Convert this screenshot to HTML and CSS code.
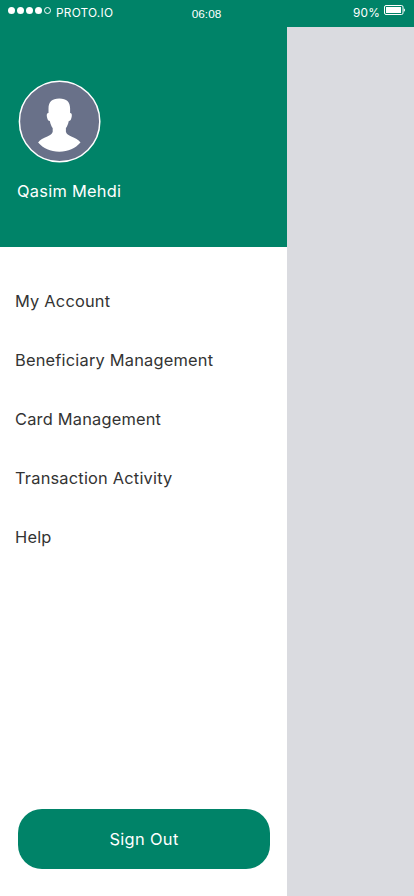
FILE: index.html
```html
<!DOCTYPE html>
<html lang="en">
<head>
<meta charset="utf-8">
<title>Account menu</title>
<link rel="stylesheet" href="styles.css">
</head>
<body>
<header class="status">
  <div class="carrier">
    <svg class="signal" width="43" height="8" viewBox="0 0 43 8">
      <g fill="#fff"><circle cx="3.5" cy="3.5" r="3.5"/><circle cx="12.5" cy="3.5" r="3.5"/><circle cx="21.5" cy="3.5" r="3.5"/><circle cx="30.5" cy="3.5" r="3.5"/></g>
      <circle cx="39.5" cy="3.5" r="3" fill="none" stroke="#fff" stroke-width="1"/>
    </svg>
    <span class="carrier-name">PROTO.IO</span>
  </div>
  <span class="time">06:08</span>
  <div class="power">
    <span class="percent">90%</span>
    <svg class="battery" width="21" height="10" viewBox="0 0 21 10">
      <rect x=".5" y=".5" width="18.5" height="9" rx="1.5" fill="none" stroke="#fff"/>
      <rect x="2" y="2" width="15" height="6" fill="#fff"/>
      <path d="M19.7 3.2Q21 3.6 21 5T19.7 6.8Z" fill="#fff"/>
    </svg>
  </div>
</header>
<aside class="drawer">
  <section class="profile">
    <svg class="avatar" width="82" height="82" viewBox="0 0 82 82">
      <circle cx="41.6" cy="40.5" r="40.2" fill="#697189" stroke="#fff" stroke-width="1.5"/>
      <path transform="translate(.3 -.5)" fill="#fff" d="M41 18C48.5 18 51.8 21.5 51.8 28V32.5C53.4 32.6 53.8 34 53.4 36.2C52.9 39 52.1 40.4 50.5 40.4C49.7 44 48.7 46 47.6 47.6V51.3C48 53.6 50.3 54.8 53 56.1C57 57.6 60 59.4 62.2 62C57 68 50 71.2 41 71.2S25 68 19.8 62C22 59.4 25 57.6 29 56.1C31.7 54.8 34 53.6 34.4 51.3V47.6C33.3 46 32.3 44 31.5 40.4C29.9 40.4 29.1 39 28.6 36.2C28.2 34 28.6 32.6 30.2 32.5V28C30.2 21.5 33.5 18 41 18Z"/>
    </svg>
    <div class="name">Qasim Mehdi</div>
  </section>
  <nav class="menu">
    <a class="item">My Account</a>
    <a class="item">Beneficiary Management</a>
    <a class="item">Card Management</a>
    <a class="item">Transaction Activity</a>
    <a class="item">Help</a>
  </nav>
  <button class="signout">Sign Out</button>
</aside>
</body>
</html>
```
FILE: styles.css
```css
* { box-sizing: border-box; }
body {
  margin: 0;
  height: 896px;
  display: flex;
  flex-direction: column;
  overflow: hidden;
  background: #dadbe0;
  font-family: Inter, "Liberation Sans", sans-serif;
}
.status {
  height: 27px;
  flex: none;
  display: grid;
  grid-template-columns: 1fr auto 1fr;
  align-items: start;
  padding: 0 9px 0 8px;
  background: #008368;
  color: #fff;
  font-size: 11.8px;
  line-height: 14px;
}
.carrier, .power { display: flex; align-items: flex-start; }
.power { justify-content: flex-end; }
.signal { margin-top: 7px; }
.carrier-name { margin: 6px 0 0 5px; letter-spacing: .25px; }
.time { margin-top: 7px; font-family: "Liberation Sans", sans-serif; font-size: 11.8px; }
.percent { margin: 6px 4px 0 0; letter-spacing: .2px; }
.battery { margin-top: 5px; }
.drawer {
  width: 287px;
  flex: 1;
  display: flex;
  flex-direction: column;
  background: #fff;
}
.profile {
  height: 220px;
  padding: 54px 17px 0;
  background: #008368;
  color: #fff;
}
.avatar { display: block; margin-left: 1px; overflow: visible; }
.name { margin-top: 18px; font-size: 16.4px; line-height: 20px; letter-spacing: .26px; }
.menu { padding: 25px 15px 0; flex: 1; }
.item {
  display: block;
  width: fit-content;
  height: 59px;
  line-height: 59px;
  font-size: 16.4px;
  letter-spacing: .2px;
  white-space: nowrap;
  color: #333;
}
.signout {
  width: 252px;
  height: 60px;
  margin: 0 0 27px 18px;
  padding: 0;
  border: 0;
  border-radius: 24px;
  background: #008368;
  color: #fff;
  font: 16.4px/60px Inter, sans-serif;
  letter-spacing: .35px;
}
```
